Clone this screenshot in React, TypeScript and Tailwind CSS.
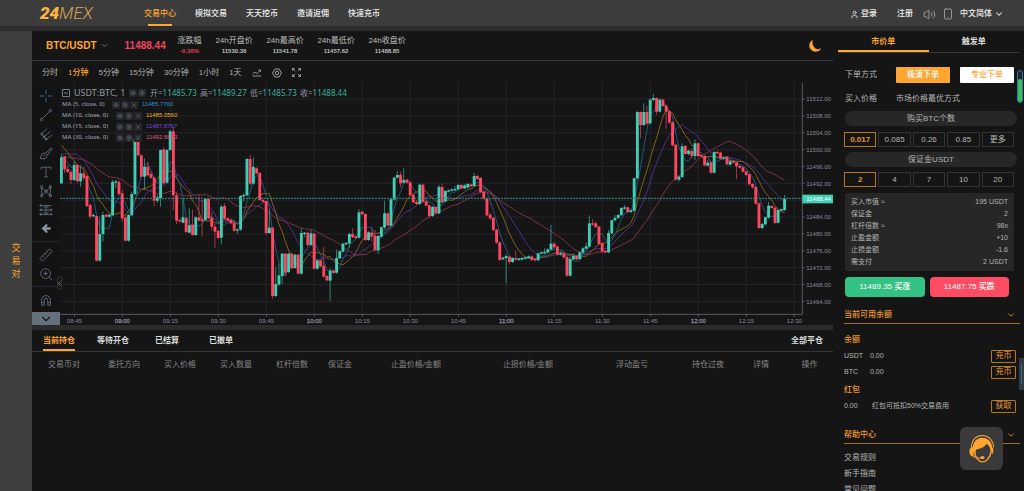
import React from "react";
import { ChevronDown, User, Volume2, Smartphone, Maximize, Settings, Eye, X, ArrowLeft } from "lucide-react";

type Candle = [open: number, close: number, high?: number, low?: number];

/* Candles at one-minute steps, in chart units measured down from the top of the plot. */
const CANDLES: Candle[] = [
  [310, 232, 223], [230, 268, 228, 280], [267, 276, 255], [276, 300, 270, 312], [300, 255, 245], [255, 304],
  [304, 280, 255, 320], [280, 294, 260, 302], [288, 378], [375, 410, 370, 418], [408, 405, 400], [408, 542],
  [542, 462, 410], [462, 405, 395, 485], [404, 410], [410, 404], [406, 306, 300], [307, 304, 300, 325],
  [306, 342, 300, 348], [340, 415, 330, 425], [412, 482], [482, 405], [406, 342, 335], [342, 177], [177, 226],
  [226, 290], [290, 260, 235, 330], [260, 286, 245], [282, 293, 275, 298], [292, 362, 292, 378],
  [362, 352, 345, 368], [354, 210, 208, 380], [208, 310, 200], [308, 210], [210, 154, 150], [154, 346, 140, 390],
  [346, 422, 335, 432], [420, 424], [428, 412, 355, 430], [414, 456], [458, 436, 385, 460], [434, 465, 388, 468],
  [465, 412], [412, 422, 345, 424], [418, 424, 360, 470], [420, 357], [357, 415], [413, 440, 395, 450],
  [440, 455, 432, 503], [453, 474], [473, 380, 375, 493], [378, 416, 370], [415, 421], [419, 430], [428, 452],
  [452, 448, 446, 462], [449, 348], [348, 345, 340, 365], [346, 237], [237, 311, 225, 316], [311, 261, 232],
  [265, 280], [279, 360], [360, 365, 353, 370], [363, 459, 363, 465], [459, 443, 388], [443, 648, 440, 656],
  [648, 612, 560], [614, 586, 550], [588, 521, 518, 612], [521, 578, 519, 588], [576, 521], [521, 565],
  [564, 524], [524, 581], [581, 459, 445], [461, 458, 456, 472], [458, 495, 455, 500], [495, 460, 450],
  [461, 566], [566, 541], [541, 559], [557, 590, 500], [588, 601], [602, 572, 565, 663], [571, 578],
  [578, 534, 508], [534, 514], [515, 491], [492, 489], [490, 462, 458, 503], [462, 471, 445], [469, 474],
  [473, 397, 388], [395, 403], [402, 480], [480, 457], [458, 470, 445, 485], [467, 510, 450, 515],
  [511, 468, 465, 522], [470, 442], [443, 400, 362], [400, 436], [437, 358], [359, 293], [293, 285, 273],
  [284, 310, 275, 322], [308, 300, 265], [299, 308], [307, 345], [345, 367], [366, 372, 360, 376], [372, 314],
  [314, 366], [364, 377], [376, 408, 374, 415], [408, 381], [381, 400], [400, 321, 315], [321, 366, 310],
  [364, 333], [334, 331], [331, 328], [330, 327, 318], [328, 315], [315, 325], [325, 316], [322, 312],
  [313, 319], [318, 288, 279], [288, 297, 284], [294, 336], [335, 356], [356, 406], [404, 415, 398, 420],
  [414, 450], [449, 488], [487, 540], [538, 533], [534, 528, 522, 610], [530, 546, 528, 553], [546, 534],
  [535, 539, 513], [539, 536], [538, 534], [535, 532], [534, 529], [529, 540], [537, 541], [541, 520],
  [521, 517], [520, 516, 505], [517, 508], [509, 491, 435], [491, 502, 486], [500, 524], [524, 520, 512],
  [520, 532], [531, 587], [587, 537, 530], [538, 528, 520], [528, 538], [537, 517], [518, 505], [506, 499, 488],
  [500, 430, 406], [430, 434, 418], [430, 441, 424], [440, 492], [490, 515], [513, 517], [517, 459, 450],
  [460, 421], [421, 414, 405], [414, 405], [405, 384], [386, 382, 375], [382, 396], [396, 391], [392, 295],
  [295, 96, 93], [96, 135, 94, 175], [135, 96, 70], [96, 131, 78], [130, 59], [60, 54, 42], [54, 95, 52, 105],
  [95, 59], [59, 78], [77, 95, 74, 146], [94, 128], [127, 196], [194, 299], [299, 290, 286, 305],
  [291, 199, 190], [198, 222], [222, 212], [213, 228, 205, 235], [228, 190, 178, 240], [190, 228], [225, 230],
  [228, 256], [257, 248, 240], [247, 278], [278, 216], [216, 219, 210], [218, 236], [236, 232], [230, 253],
  [254, 244], [243, 248], [247, 259, 244, 298], [258, 263], [262, 275], [274, 285], [283, 313], [312, 322],
  [321, 371], [370, 444], [444, 432, 428, 447], [433, 412], [413, 377, 366], [378, 384], [383, 429],
  [428, 390], [391, 388], [390, 357, 345],
];

/* Closes before the first visible candle, which the averages start from. */
const EARLIER = [...Array(15).fill(234), ...Array(5).fill(276), ...Array(5).fill(160), ...Array(4).fill(230)] as number[];
const CLOSES = [...EARLIER, ...CANDLES.map((c) => c[1])];
const candleX = (i: number) => 4 + 9.6 * i;

function averagePoints(period: number) {
  return CANDLES.map((_, i) => {
    const end = i + EARLIER.length + 1;
    const sum = CLOSES.slice(end - period, end).reduce((a, b) => a + b, 0);
    return `${candleX(i).toFixed(1)},${(sum / period).toFixed(1)}`;
  }).join(" ");
}

const AVERAGES = [
  { period: 30, color: "#7c3348" },
  { period: 15, color: "#4b2f86" },
  { period: 10, color: "#80601c" },
  { period: 5, color: "#1f567b" },
];

const TIMES = ["08:45", "09:00", "09:15", "09:30", "09:45", "10:00", "10:15", "10:30", "10:45", "11:00", "11:15", "11:30", "11:45", "12:00", "12:15", "12:30"];

function Chart() {
  const prices = Array.from({ length: 13 }, (_, k) => 11512 - 4 * k);
  return (
    <svg viewBox="0 9 2319 726" className="block h-auto w-full" role="img" aria-label="USDT:BTC">
      {TIMES.map((t, k) => (
        <g key={t}>
          <line x1={43 + 144 * k} x2={43 + 144 * k} y1={9} y2={703} stroke="#24242b" strokeWidth={3} />
          <line x1={43 + 144 * k} x2={43 + 144 * k} y1={703} y2={710} stroke="#5a5a5e" strokeWidth={3} />
          <text x={43 + 144 * k} y={728} textAnchor="middle" fontSize={18} fill="#8a8d9b" stroke="#8a8d9b" strokeWidth={k % 4 === 1 ? 0.8 : 0}>{t}</text>
        </g>
      ))}
      {prices.map((p, k) => (
        <g key={p}>
          <line x1={0} x2={2227} y1={57 + 50.6 * k} y2={57 + 50.6 * k} stroke="#24242b" strokeWidth={3} />
          <line x1={2227} x2={2234} y1={57 + 50.6 * k} y2={57 + 50.6 * k} stroke="#5a5a5e" strokeWidth={3} />
          {p !== 11488 && <text x={2239} y={64 + 50.6 * k} fontSize={18} fill="#8a8d9b">{p.toFixed(2)}</text>}
        </g>
      ))}
      {AVERAGES.map((a) => (
        <polyline key={a.period} points={averagePoints(a.period)} fill="none" stroke={a.color} strokeWidth={3} strokeLinejoin="round" />
      ))}
      {CANDLES.map(([open, close, high, low], i) => {
        const top = Math.min(open, close);
        const bottom = Math.max(open, close);
        const up = close < open;
        return (
          <g key={i}>
            <line x1={candleX(i)} x2={candleX(i)} y1={high ?? top - 3} y2={low ?? bottom + 3} stroke={up ? "#2c8676" : "#a8334a"} strokeWidth={3} />
            <rect x={candleX(i) - 4.2} y={top} width={8.6} height={Math.max(bottom - top, 4)} fill={up ? "#3fcfb4" : "#ff4761"} />
          </g>
        );
      })}
      <line x1={0} x2={2227} y1={355} y2={355} stroke="#2f9482" strokeWidth={3} strokeDasharray="6 3" />
      <path d="M2227 9V703M0 703H2227" stroke="#5a5a5e" strokeWidth={3} fill="none" />
      <rect x={2227} y={344} width={92} height={26} fill="#41cfb5" />
      <text x={2239} y={364} fontSize={18} fill="#ffffff">11488.44</text>
    </svg>
  );
}

const OHLC = [
  ["开", "11485.73"],
  ["高", "11489.27"],
  ["低", "11485.73"],
  ["收", "11488.44"],
];

const LEGEND = [
  { label: "MA (5, close, 0)", value: "11485.7760", color: "text-[#3090d8]", width: "w-[46px]" },
  { label: "MA (10, close, 0)", value: "11485.0560", color: "text-[#f0ad1e]", width: "w-[50px]" },
  { label: "MA (15, close, 0)", value: "11487.8767", color: "text-[#7546dc]", width: "w-[50px]" },
  { label: "MA (30, close, 0)", value: "11492.8833", color: "text-[#e0557a]", width: "w-[50px]" },
];

function LegendIcons({ closable }: { closable?: boolean }) {
  const box = "flex h-2 w-2 items-center justify-center bg-[#24272a] text-[#596068]";
  return (
    <span className="flex gap-px">
      <button className={box} aria-label="显示"><Eye size={6} strokeWidth={3} /></button>
      <button className={box} aria-label="设置"><Settings size={6} strokeWidth={3} /></button>
      {closable && <button className={box} aria-label="删除"><X size={6} strokeWidth={3} /></button>}
    </span>
  );
}

function Legend() {
  return (
    <div className="absolute left-0.5 top-1 font-['Noto_Sans','Noto_Sans_CJK_SC',sans-serif] text-[#9297a3]">
      <div className="flex h-3 items-center gap-1 text-[8px]">
        <svg viewBox="0 0 8 8" className="h-2 w-2" fill="none" stroke="#777c86"><path d="M.5 .5h7v7h-7zM2 4h4" /></svg>
        <span className="w-[51px] whitespace-nowrap text-[9px]">USDT:BTC, 1</span>
        <LegendIcons />
        {OHLC.map(([name, value]) => (
          <span key={name} className="w-[46px] whitespace-nowrap">{name}=<span className="text-[#38b29c]">{value}</span></span>
        ))}
      </div>
      {LEGEND.map((m) => (
        <div key={m.label} className="flex h-[11px] items-center gap-1 text-[6px]">
          <span className={`${m.width} whitespace-nowrap font-medium`}>{m.label}</span>
          <LegendIcons closable />
          <span className={`font-['Liberation_Sans',sans-serif] ${m.color}`}>{m.value}</span>
        </div>
      ))}
    </div>
  );
}

const TOOL_DRAWINGS: { name: string; art: React.ReactNode }[] = [
  { name: "十字线", art: <path d="M8 1v5M8 10v5M1 8h5M10 8h5" stroke="#2f7fa0" /> },
  { name: "趋势线", art: <><path d="M4 12L12 4" /><circle cx="3" cy="13" r="1.4" /><circle cx="13" cy="3" r="1.4" /></> },
  { name: "叉形线", art: <><path d="M2 9L9 2M4 13L13 5M7 15L15 9M3 8l5 6" /><circle cx="3" cy="8" r="1" /><circle cx="8" cy="14" r="1" /><circle cx="6" cy="11" r="1" /></> },
  { name: "画笔", art: <path d="M1 14c2-1 1-5 4-6 3 0 5 2 4 4-1 3-5 3-8 2zM8 8l6-6 1 1-5 7M5 11l2-1" /> },
  { name: "文字", art: <path d="M2.500 5V2.500h11V5M8 2.500v11M6 13.500h4" /> },
  { name: "形态", art: <><path d="M3 13V4l5 5 5-6v10L8 9l-5 4" /><circle cx="3" cy="3" r="1.300" /><circle cx="13" cy="3" r="1.300" /><circle cx="3" cy="13.500" r="1.300" /><circle cx="13" cy="13.500" r="1.300" /><circle cx="8" cy="8" r="1.300" /></> },
  { name: "预测", art: <><path d="M1 3h13M1 8h13M1 13h13M8 3v10M5 6l3-3 3 3M5 10l3 3 3-3" /><circle cx="2" cy="3" r="1" /><circle cx="2" cy="8" r="1" /><circle cx="14" cy="8" r="1" /><circle cx="2" cy="13" r="1" /><circle cx="14" cy="13" r="1" /></> },
];

const TOOL_BUTTON = "flex h-[19px] w-full items-center justify-center text-[#66717e]";
const TOOL_SVG = "h-[14px] w-[14px] fill-none stroke-current";

function Toolbar() {
  return (
    <div className="relative flex w-7 shrink-0 flex-col bg-[#131313]">
      <div className="border-b border-[#25252f] py-[3px]">
        {TOOL_DRAWINGS.map((t) => (
          <button key={t.name} aria-label={t.name} className={TOOL_BUTTON}>
            <svg viewBox="0 0 16 16" className={TOOL_SVG}>{t.art}</svg>
          </button>
        ))}
        <button aria-label="返回" className={TOOL_BUTTON}><ArrowLeft size={11} strokeWidth={5} className="text-[#8b95a3]" /></button>
      </div>
      <div className="border-b border-[#25252f] py-[3px]">
        <button aria-label="测量" className={TOOL_BUTTON}>
          <svg viewBox="0 0 16 16" className={TOOL_SVG}><path d="M1 12L12 1l3 3L4 15zM4 9l1.500 1.500M6.500 6.500L8 8M9 4l1.500 1.500" /></svg>
        </button>
        <button aria-label="放大" className={TOOL_BUTTON}>
          <svg viewBox="0 0 16 16" className={TOOL_SVG}><circle cx="7.500" cy="7.500" r="5.500" /><path d="M7.500 5v5M5 7.500h5M11.500 11.500L15 15" /></svg>
        </button>
      </div>
      <div className="flex-1 pt-[3px]">
        <button aria-label="磁铁" className={TOOL_BUTTON}>
          <svg viewBox="0 0 16 16" className={TOOL_SVG}><path d="M3 14V8a5 5 0 0 1 10 0v6h-3V8a2 2 0 0 0-4 0v6zM3 11h3M10 11h3" /></svg>
        </button>
      </div>
      <button aria-label="更多工具" className="flex h-[13px] items-center justify-center bg-[#66707c] text-[#14181c]">
        <ChevronDown size={14} strokeWidth={2} />
      </button>
      <button aria-label="收起" className="absolute -right-0.5 top-[193px] z-10 flex h-[14px] w-[5px] items-center justify-center rounded-sm border border-[#33343b] bg-[#151515]">
        <svg viewBox="0 0 3 5" className="h-[5px] w-[3px]" fill="none" stroke="#9a9a9a" strokeWidth="0.800"><path d="M2.300 .5L.8 2.500l1.500 2" /></svg>
      </button>
    </div>
  );
}

const NAV = ["交易中心", "模拟交易", "天天挖币", "邀请返佣", "快速充币"];

function Header() {
  return (
    <header className="flex h-[31px] shrink-0 items-start border-b-[5px] border-[#2d2d2d] bg-[#3c3c3c] text-[8px] font-medium text-[#eeeeee]">
      <a href="#" aria-label="24MEX" className="ml-10 flex h-[26px] w-[56px] items-center pt-0.5 font-['Roboto',sans-serif] text-[17px] italic text-[#ffb53c]">
        <span className="font-black">24</span><span className="font-light text-[#dba65a]">MEX</span>
      </a>
      <nav className="ml-12 flex gap-[19px]">
        {NAV.map((n, i) => (
          <a key={n} href="#" className={i === 0 ? "relative flex h-[26px] items-center pt-0.5 text-[#ffa532]" : "flex h-[26px] items-center pt-0.5"}>
            {n}
            {i === 0 && <span className="absolute inset-x-1 bottom-0 h-0.5 bg-[#ffa532]" />}
          </a>
        ))}
      </nav>
      <div className="ml-auto flex h-[26px] items-center pr-5 pt-0.5">
        <a href="#" className="flex items-center gap-0.5"><User size={9} />登录</a>
        <a href="#" className="ml-5">注册</a>
        <button aria-label="声音" className="ml-2.5 text-[#b0b0b0]"><Volume2 size={13} strokeWidth={1.500} /></button>
        <button aria-label="手机" className="ml-1.5 text-[#b0b0b0]"><Smartphone size={12} strokeWidth={1.500} /></button>
        <button className="ml-1.5 flex items-center gap-0.5">中文简体<ChevronDown size={10} strokeWidth={2.500} /></button>
      </div>
    </header>
  );
}

const STATS = [
  ["24h开盘价", "11530.38"],
  ["24h最高价", "11541.78"],
  ["24h最低价", "11457.62"],
  ["24h收盘价", "11488.85"],
];

function QuoteBar() {
  return (
    <div className="flex h-[30px] items-center border-b border-[#3a3a3a] pl-3.5 text-[8px] text-[#bdbdbd]">
      <button className="flex items-center gap-[3px] text-[10px] font-bold text-[#ffa532]">BTC/USDT<ChevronDown size={9} className="text-[#909090]" /></button>
      <span className="ml-4 w-[44px] text-[10px] font-bold text-[#f0455e]">11488.44</span>
      <div className="ml-[9px] w-6 pt-px text-center leading-[10px]">
        <div>涨跌幅</div>
        <div className="text-[6px] font-bold leading-[10px] text-[#e23c52]">-0.36%</div>
      </div>
      <div className="ml-[7px] flex pt-px">
        {STATS.map(([label, value]) => (
          <div key={label} className="w-[51px] text-center leading-[10px]">
            <div>{label}</div>
            <div className="text-[6px] font-bold leading-[10px]">{value}</div>
          </div>
        ))}
      </div>
      <button aria-label="夜间模式" className="ml-auto mr-3">
        <svg viewBox="0 0 36 36" className="h-3 w-3"><path d="M12 0C4 4 0 11 1 19c2 12 14 19 25 15 5-1 8-4 10-9-7 4-14 3-19-2C10 17 9 8 12 0z" fill="#ffa532" /></svg>
      </button>
    </div>
  );
}

const PERIODS = ["分时", "1分钟", "5分钟", "15分钟", "30分钟", "1小时", "1天"];

function PeriodBar() {
  return (
    <div className="flex h-[22px] items-center gap-2.5 pl-2.5 pt-px text-[8px] text-[#b0b0b0]">
      {PERIODS.map((p, i) => (
        <button key={p} className={i === 1 ? "font-medium text-[#ffa532]" : ""}>{p}</button>
      ))}
      <button aria-label="指标">
        <svg viewBox="0 0 20 16" className="h-2 w-2.5" fill="none" stroke="currentColor" strokeWidth="1.600"><path d="M1 10l5-4 4 3 7-7M13 2h4v4M1 14h17" /></svg>
      </button>
      <button aria-label="设置">
        <svg viewBox="0 0 20 20" className="h-2.5 w-2.5" fill="none" stroke="currentColor" strokeWidth="1.800"><path d="M6 2h8l5 8-5 8H6l-5-8z" /><circle cx="10" cy="10" r="3.500" /></svg>
      </button>
      <button aria-label="全屏">
        <svg viewBox="0 0 20 20" className="h-[9px] w-[9px]" fill="none" stroke="currentColor" strokeWidth="2"><path d="M1 6V1h5M14 1h5v5M19 14v5h-5M6 19H1v-5M2 2l5 5M18 2l-5 5M18 18l-5-5M2 18l5-5" /></svg>
      </button>
    </div>
  );
}

const ORDER_TABS = ["当前持仓", "等待开仓", "已结算", "已撤单"];
const COLUMNS: [string, string][] = [
  ["交易币对", "w-[64px]"], ["委托方向", "w-[56px]"], ["买入价格", "w-[56px]"], ["买入数量", "w-[56px]"],
  ["杠杆倍数", "w-[56px]"], ["保证金", "w-[40px]"], ["止盈价格/金额", "w-[112px]"], ["止损价格/金额", "w-[112px]"],
  ["浮动盈亏", "w-[96px]"], ["持仓过夜", "w-[56px]"], ["详情", "w-[50px]"], ["操作", "w-[47px]"],
];

function Orders() {
  return (
    <section className="flex-1 border-t-[5px] border-[#2b2b2b]">
      <div className="flex h-[22px] items-center border-b border-[#363636] text-[8px] font-bold text-[#dddddd]">
        {ORDER_TABS.map((t, i) => (
          <button key={t} className="flex h-full w-[54px] justify-center">
            <span className={i === 0 ? "flex h-full items-center border-b-2 border-[#ffa532] pt-0.5 text-[#ffa532]" : "flex h-full items-center"}>{t}</span>
          </button>
        ))}
        <button className="ml-auto mr-2.5">全部平仓</button>
      </div>
      <table className="w-full table-fixed text-[8px] text-[#858585]">
        <thead>
          <tr className="h-[26px]">
            {COLUMNS.map(([name, width]) => (
              <th key={name} className={`${width} whitespace-nowrap p-0 text-center font-normal`}>{name}</th>
            ))}
          </tr>
        </thead>
      </table>
    </section>
  );
}

function OptionRow({ options }: { options: string[] }) {
  return (
    <div className="-ml-px mr-[3px] grid grid-cols-5 gap-0.5 text-[8px]">
      {options.map((o, i) => (
        <button key={o} className={i === 0 ? "h-[15px] border border-[#b87722] font-bold text-[#e8962e]" : "h-[15px] border border-[#333333] text-[#b5b5b5]"}>{o}</button>
      ))}
    </div>
  );
}

const SUMMARY = [
  ["买入市值 ≈", "195 USDT"],
  ["保证金", "2"],
  ["杠杆倍数 ≈", "98x"],
  ["止盈金额", "+10"],
  ["止损金额", "-1.6"],
  ["需支付", "2 USDT"],
];

function SectionTitle({ children }: { children: React.ReactNode }) {
  return (
    <button className="flex h-[18px] w-full items-center justify-between border-b border-[#a86d20] pr-1 text-[8px] font-medium text-[#ef9a2f]">
      {children}<ChevronDown size={10} strokeWidth={2} />
    </button>
  );
}

const SMALL_BUTTON = "flex h-[13px] w-[25px] items-center justify-center rounded-[1px] border border-[#b87722] text-[8px] text-[#ef9a2f]";

function Balance({ name, note, action, gap }: { name: string; note: string; action: string; gap: string }) {
  return (
    <div className="flex h-4 items-center pr-1 text-[7px]">
      <span className={gap}>{name}</span>
      <span className="flex-1">{note}</span>
      <button className={SMALL_BUTTON}>{action}</button>
    </div>
  );
}

function TradePanel() {
  return (
    <aside className="w-[191px] shrink-0 text-[8px] text-[#b5b5b5]">
      <div className="mx-[5px] flex h-[22px] border-b border-[#383838] font-bold">
        <button className="h-[21px] flex-1 border-b-2 border-[#ffa532] pt-0.5 text-[#ffa532]">市价单</button>
        <button className="h-[21px] flex-1 pt-px text-[#dddddd]">触发单</button>
      </div>
      <div className="pl-3 pr-[7px]">
        <div className="mr-[3px] mt-3.5 flex h-4 items-center">
          <span className="w-[51px]">下单方式</span>
          <button className="h-4 flex-1 rounded-[1px] bg-[#ffa532] font-medium text-white">极速下单</button>
          <button className="ml-2.5 h-4 flex-1 rounded-[1px] bg-white font-medium text-[#ffa532]">专业下单</button>
        </div>
        <div className="mt-2 flex h-4 items-center"><span className="w-[51px]">买入价格</span><span>市场价格最优方式</span></div>
        <div className="mt-1 mb-1.5 flex h-[15px] items-center justify-center rounded-full bg-[#272727]">购买BTC个数</div>
        <OptionRow options={["0.017", "0.085", "0.26", "0.85", "更多"]} />
        <div className="my-[5px] flex h-[15px] items-center justify-center rounded-full bg-[#272727]">保证金USDT</div>
        <OptionRow options={["2", "4", "7", "10", "20"]} />
        <dl className="mr-[3px] mt-1.5 bg-[#272727] px-1.5 py-[3px] text-[7px] leading-[12px]">
          {SUMMARY.map(([k, v]) => (
            <div key={k} className="flex justify-between"><dt>{k}</dt><dd>{v}</dd></div>
          ))}
        </dl>
        <div className="mr-2 mt-1.5 flex gap-[5px] font-medium text-white">
          <button className="h-5 flex-1 rounded-sm bg-[#33c184]">11489.35 买涨</button>
          <button className="h-5 flex-1 rounded-sm bg-[#ff4c63]">11487.75 买跌</button>
        </div>
      </div>
      <div className="ml-[11px] mr-1 mt-[9px]">
        <SectionTitle>当前可用余额</SectionTitle>
        <h3 className="mt-2 h-4 font-medium leading-[16px] text-[#ef9a2f]">余额</h3>
        <Balance name="USDT" note="0.00" action="充币" gap="w-[26px]" />
        <Balance name="BTC" note="0.00" action="充币" gap="w-[26px]" />
        <h3 className="mt-0.5 h-4 font-medium leading-[16px] text-[#ef9a2f]">红包</h3>
        <Balance name="0.00" note="红包可抵扣50%交易费用" action="获取" gap="w-[28px]" />
        <div className="mt-3"><SectionTitle>帮助中心</SectionTitle></div>
        <ul className="mt-1.5 leading-[16px]">
          {["交易规则", "新手指南", "常见问题"].map((t) => <li key={t}><a href="#">{t}</a></li>)}
        </ul>
      </div>
    </aside>
  );
}

function Support() {
  return (
    <button aria-label="在线客服" className="absolute bottom-[21px] right-[21px] h-[43px] w-[43px] rounded-md bg-[#3a3a3a]">
      <svg viewBox="0 0 128 128" className="h-full w-full" fill="none" stroke="#ffa532">
        <path d="M34 60C35 37 49 25 66 25s33 12 34 36" strokeWidth="3" />
        <path d="M41 78C32 52 46 32 66 32s34 16 29 42l-4-1c0-11-5-17-11-23-8 10-20 16-30 16-4 4-4 8-4 12z" fill="#ffa532" stroke="none" />
        <path d="M44 74c0 16 12 30 23 30s24-14 25-32" strokeWidth="4" />
        <path d="M40 59c-8 0-12 6-12 14s5 15 13 15z" fill="#ffa532" stroke="none" />
        <path d="M95 60c6 2 6 18-1 22z" fill="#ffa532" stroke="none" />
        <path d="M37 84c5 7 14 9 26 8" strokeWidth="3" />
        <ellipse cx="67" cy="91" rx="6" ry="4.500" fill="#ffa532" stroke="none" />
      </svg>
    </button>
  );
}

export default function App() {
  return (
    <div className="relative flex h-screen flex-col overflow-hidden bg-[#151515] font-['Liberation_Sans','Noto_Sans_CJK_SC',sans-serif]">
      <Header />
      <div className="flex min-h-0 flex-1">
        <button className="flex w-8 shrink-0 flex-col items-center justify-center bg-[#3e3e3e] text-[9px] leading-[13px] text-[#ffa532]">
          <span>交</span><span>易</span><span>对</span>
        </button>
        <main className="flex min-w-0 flex-1 flex-col">
          <QuoteBar />
          <PeriodBar />
          <div className="flex">
            <Toolbar />
            <div className="relative min-w-0 flex-1">
              <Chart />
              <Legend />
            </div>
          </div>
          <Orders />
        </main>
        <TradePanel />
      </div>
      <div className="absolute right-px top-[70px] flex h-[33px] w-1.5 flex-col justify-end rounded-sm border border-[#2b78a8] bg-[#20242c]">
        <span className="h-[23px] rounded-sm bg-[#35c25c]" />
      </div>
      <div className="absolute right-0 top-[358px] flex h-8 w-[5px] items-center justify-center bg-[#333a44]">
        <span className="h-5 w-px bg-[#3d6d80]" />
      </div>
      <Support />
    </div>
  );
}
